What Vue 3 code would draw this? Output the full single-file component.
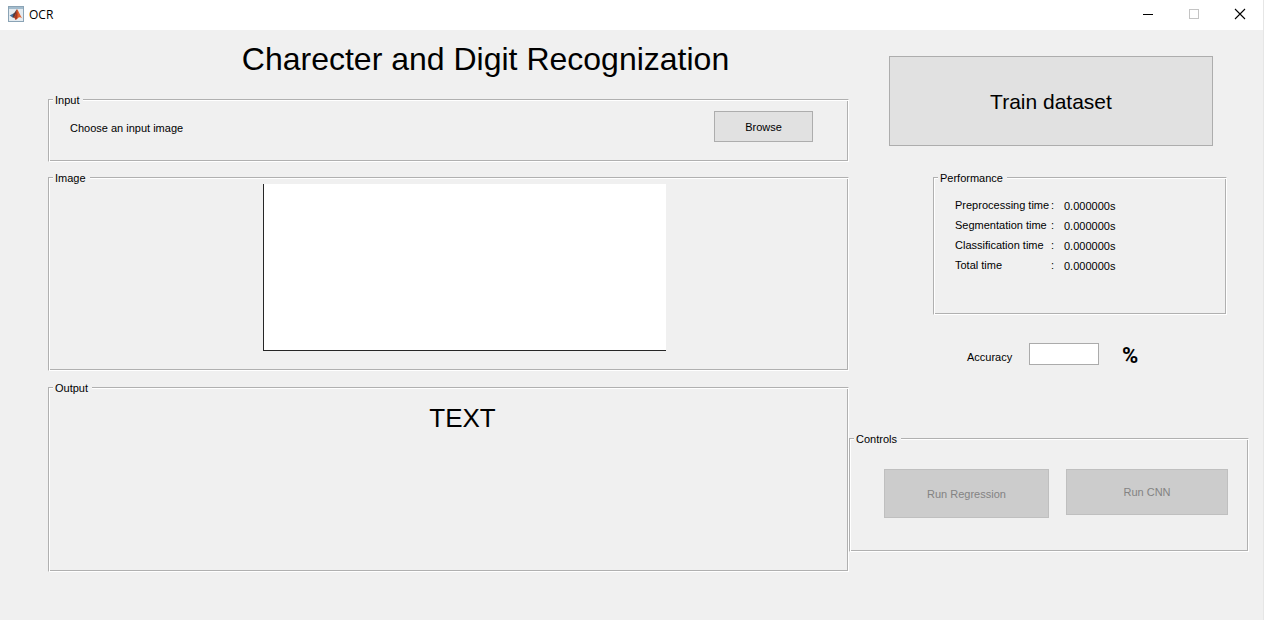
<script setup>
import { ref } from 'vue'

const accuracy = ref('')
const timings = [
  { label: 'Preprocessing time', value: '0.000000s' },
  { label: 'Segmentation time', value: '0.000000s' },
  { label: 'Classification time', value: '0.000000s' },
  { label: 'Total time', value: '0.000000s' },
]
</script>

<template>
  <div class="window">
    <header class="titlebar">
      <svg class="app-icon" viewBox="0 0 16 16" aria-hidden="true">
        <rect x="0.5" y="0.5" width="15" height="15" fill="#e4ebf0" stroke="#8aa3b5" />
        <rect x="1" y="1" width="14" height="2" fill="#a3bccd" />
        <path d="M1.6 9.6 L5.4 7.4 L7 9.4 L4.6 11.4 Z" fill="#3f6f9f" />
        <path d="M5.4 7.4 C7 7 7.6 4 9 3.2 L8.4 9 L6 11.8 L4.6 11.4 Z" fill="#5a3a3a" />
        <path d="M9 3.2 C10.6 4.4 11.6 9 14.6 12.4 C12.4 11 11 11 9.6 12.4 L7.6 14 C7.4 12.6 6.8 12 6 11.8 C7.6 10 8.2 6 9 3.2 Z" fill="#e0622f" />
        <path d="M9 3.2 C9.6 6 9.8 9 9.2 12.6 L7.6 14 C7.4 12.6 6.8 12 6 11.8 C7.6 10 8.2 6 9 3.2 Z" fill="#a9361f" />
      </svg>
      <span class="app-name">OCR</span>
      <div class="window-buttons">
        <button type="button" aria-label="Minimize">
          <svg viewBox="0 0 12 12"><path d="M1 6.5H11" stroke="#000" /></svg>
        </button>
        <button type="button" aria-label="Maximize" disabled>
          <svg viewBox="0 0 12 12"><rect x="1.5" y="1.5" width="9" height="9" fill="none" stroke="#c4c4c4" /></svg>
        </button>
        <button type="button" aria-label="Close">
          <svg viewBox="0 0 12 12"><path d="M1 1L11 11M11 1L1 11" stroke="#000" stroke-width="1.1" /></svg>
        </button>
      </div>
    </header>

    <main class="content">
      <div class="left">
        <h1>Charecter and Digit Recognization</h1>

        <fieldset class="panel input-panel">
          <legend>Input</legend>
          <div class="input-row">
            <label for="browse">Choose an input image</label>
            <button id="browse" type="button" class="btn browse" aria-label="Browse">Browse</button>
          </div>
        </fieldset>

        <fieldset class="panel image-panel">
          <legend>Image</legend>
          <div class="axes"></div>
        </fieldset>

        <fieldset class="panel output-panel">
          <legend>Output</legend>
          <output class="result">TEXT</output>
        </fieldset>
      </div>

      <div class="right">
        <button type="button" class="btn train">Train dataset</button>

        <fieldset class="panel performance">
          <legend>Performance</legend>
          <table>
            <tbody>
              <tr v-for="t in timings" :key="t.label">
                <th scope="row">{{ t.label }}</th>
                <td class="colon">:</td>
                <td class="value">{{ t.value }}</td>
              </tr>
            </tbody>
          </table>
        </fieldset>

        <div class="accuracy">
          <label for="accuracy">Accuracy</label>
          <input id="accuracy" v-model="accuracy" type="text" />
          <span class="percent">%</span>
        </div>

        <fieldset class="panel controls">
          <legend>Controls</legend>
          <div class="run-row">
            <button type="button" class="btn run regression" disabled>Run Regression</button>
            <button type="button" class="btn run cnn" disabled>Run CNN</button>
          </div>
        </fieldset>
      </div>
    </main>
  </div>
</template>

<style>
body {
  margin: 0;
  background: #f0f0f0;
}
</style>

<style scoped>
.window {
  box-sizing: border-box;
  min-height: 100vh;
  background: #f0f0f0;
  border-right: 1px solid #e6e6e6;
  color: #000;
  font-family: "Liberation Sans", Arial, sans-serif;
  font-size: 11px;
  line-height: 14px;
}

.titlebar {
  display: flex;
  align-items: center;
  height: 30px;
  padding-left: 8px;
  background: #fff;
}

.app-icon {
  width: 16px;
  height: 16px;
  margin-bottom: 2px;
}

.app-name {
  margin-left: 5px;
  font-family: "Open Sans", "Noto Sans", sans-serif;
  font-size: 12px;
  line-height: 28px;
}

.window-buttons {
  display: flex;
  margin-left: auto;
}

.window-buttons button {
  display: flex;
  align-items: center;
  justify-content: center;
  width: 46px;
  height: 28px;
  margin-bottom: 2px;
  padding: 0;
  border: 0;
  background: none;
}

.window-buttons svg {
  width: 12px;
  height: 12px;
}

.content {
  display: grid;
  grid-template-columns: 801fr 400fr;
  padding: 0 14px 0 48px;
}

.left,
.right {
  display: flex;
  flex-direction: column;
  min-width: 0;
}

h1 {
  margin: 10px 0 14px;
  padding-left: 74px;
  font-size: 32px;
  font-weight: 400;
  line-height: 38px;
  text-align: center;
}

/* Etched frame: a grey line with a white line just below and right of it. */
.panel {
  box-sizing: border-box;
  min-width: 0;
  margin: 0;
  padding: 0;
  border: 1px solid;
  border-color: #b0b0b0 #fff #fff #b0b0b0;
  box-shadow: inset 1px 1px 0 #fff, inset -1px -1px 0 #b0b0b0;
}

legend {
  margin-left: 4px;
  padding: 3px 4px 0 2px;
  background: #f0f0f0;
  line-height: 11px;
}

.btn {
  box-sizing: border-box;
  padding: 0;
  border: 1px solid #adadad;
  background: #e1e1e1;
  color: #000;
  font: inherit;
}

.input-panel {
  min-height: 70px;
}

.input-row {
  display: flex;
  align-items: center;
  justify-content: space-between;
  padding: 5px 35px 0 21px;
}

.input-row label {
  padding-top: 2px;
}

.browse {
  width: 99px;
  height: 31px;
}

.image-panel {
  min-height: 201px;
  margin-top: 8px;
}

.axes {
  box-sizing: border-box;
  width: 50.4%;
  height: 167px;
  margin-left: 26.8%;
  border: solid #262626;
  border-width: 0 0 1px 1px;
  background: #fff;
}

.output-panel {
  min-height: 192px;
  margin-top: 9px;
}

.result {
  display: block;
  padding: 8px 0 0 28px;
  font-size: 26px;
  line-height: 32px;
  text-align: center;
}

.train {
  height: 90px;
  margin: 26px 9% 0 10%;
  padding-top: 2px;
  font-size: 21px;
}

.performance {
  min-height: 145px;
  margin: 24px 22px 0 84px;
}

table {
  margin: 11px 0 0 21px;
  border-collapse: collapse;
}

th,
td {
  box-sizing: border-box;
  height: 20px;
  padding: 0;
  font-weight: 400;
  text-align: left;
}

th {
  width: 96px;
}

.colon {
  width: 13px;
}

.value {
  padding-top: 2px;
}

.accuracy {
  display: flex;
  align-items: center;
  margin: 28px 0 0 118px;
}

.accuracy label {
  width: 62px;
  padding-top: 6px;
}

.accuracy input {
  box-sizing: border-box;
  width: 70px;
  height: 22px;
  padding: 0 4px;
  border: 1px solid #ababab;
  background: #fff;
  font: inherit;
}

.percent {
  height: 22px;
  margin-left: 23px;
  font-family: Roboto, "Liberation Sans", sans-serif;
  font-size: 22px;
  font-weight: 700;
  line-height: 26px;
}

.controls {
  min-height: 121px;
  margin-top: 66px;
}

.run-row {
  display: flex;
  align-items: flex-start;
  gap: 17px;
  padding: 24px 20px 0 34px;
}

.run {
  border-color: #bfbfbf;
  background: #ccc;
  color: #838383;
}

.regression {
  flex: 165;
  height: 49px;
}

.cnn {
  flex: 162;
  height: 46px;
}
</style>
